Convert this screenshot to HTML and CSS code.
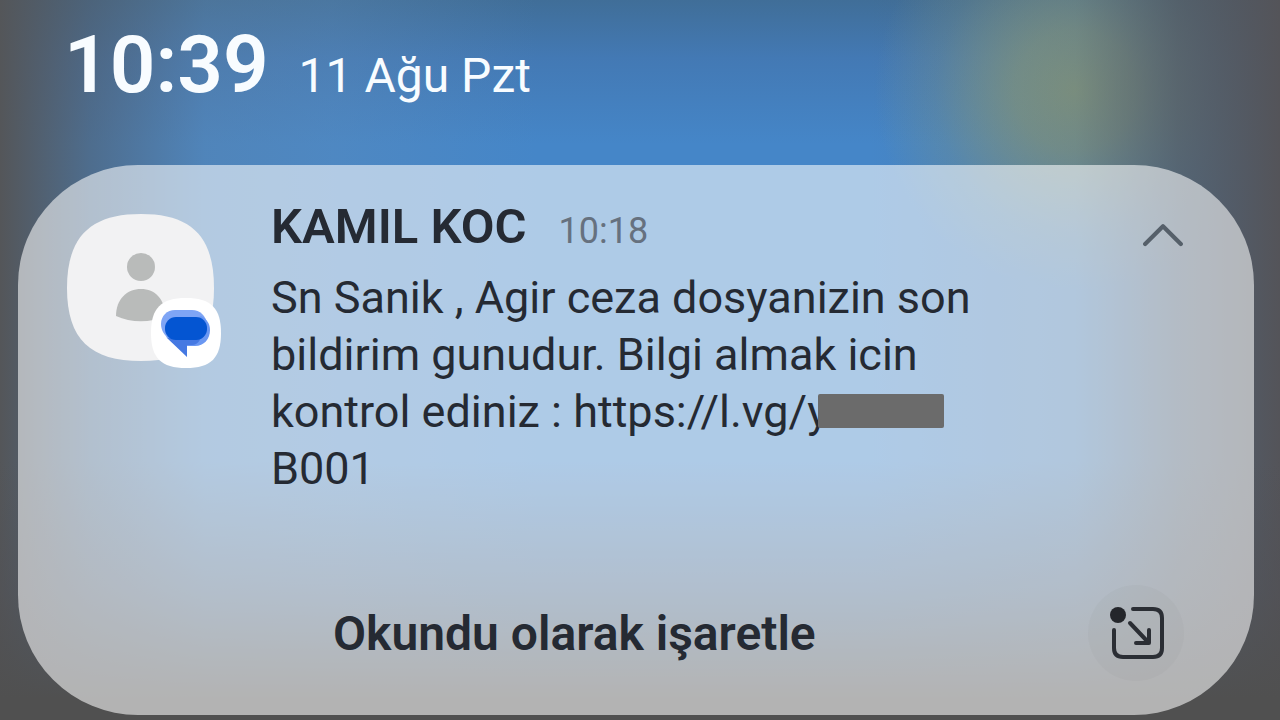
FILE: index.html
```
<!DOCTYPE html>
<html lang="tr">
<head>
<meta charset="UTF-8">
<meta name="viewport" content="width=device-width, initial-scale=1.0">

<title>Bildirimler</title>

<link rel="stylesheet" href="styles.css">
</head>

<body>

<!-- STATUS -->
<header class="status">
  <time class="clock">10:39</time>
  <span class="date">11 Ağu Pzt</span>
</header>

<!-- NOTIFICATION -->
<main class="card">

  <div class="row">
    <div class="avatar">
      <svg viewBox="0 0 148 148" aria-hidden="true">
        <path fill="#f2f2f3" d="M74 0C124 0 147 22 147 74S124 147 74 147 0 126 0 74 24 0 74 0Z"/>
        <circle cx="74" cy="53" r="14" fill="#b9bbba"/>
        <path fill="#b9bbba" d="M74 75c14 0 24 10 24 27-14 7-34 7-49 0 0-17 11-27 25-27Z"/>
      </svg>
      <svg class="badge" viewBox="0 0 70 70" aria-hidden="true">
        <path fill="#fff" d="M35 0C60 0 70 10 70 35S60 70 35 70 0 60 0 35 10 0 35 0Z"/>
        <path fill="#7fa5f5" d="M24 12h17c8 0 14 6 15 14L18 41c-5-4-8-9-8-15 0-8 6-14 14-14Z"/>
        <path fill="#6a97f2" d="M50 18c6 3 9 8 9 14 0 9-6 16-15 16h-8L15 39Z"/>
        <path fill="#4679e2" d="M16 40h32c3 0-1 7-7 7h-5v12Z"/>
        <rect x="14" y="19" width="42" height="23" rx="11" fill="#0455d2"/>
      </svg>
    </div>

    <div class="message">
      <div class="title">
        <h1>KAMIL KOC</h1>
        <time>10:18</time>
      </div>
      <p>Sn Sanik , Agir ceza dosyanizin son bildirim gunudur. Bilgi almak icin kontrol ediniz : https://l.vg/y<span class="redacted"></span> B001</p>
    </div>

    <button class="toggle" aria-label="Daralt">
      <svg viewBox="0 0 40 24" aria-hidden="true">
        <path d="M3 21 20 4l17 17" fill="none" stroke="#56606a" stroke-width="4" stroke-linecap="round" stroke-linejoin="round"/>
      </svg>
    </button>
  </div>

  <div class="actions">
    <button class="read">Okundu olarak işaretle</button>
    <button class="popup" aria-label="Açılır pencerede aç">
      <svg viewBox="0 0 56 56" aria-hidden="true">
        <circle cx="10" cy="10" r="8" fill="#24262b"/>
        <g fill="none" stroke="#2b2e34" stroke-width="4" stroke-linecap="round" stroke-linejoin="round">
          <path d="M25 4h20q9 0 9 9v30q0 9-9 9H15q-9 0-9-9V25"/>
          <path d="M22 18l18 19M28 38h13V25"/>
        </g>
      </svg>
    </button>
  </div>

</main>

</body>
</html>
```

FILE: styles.css
```
*{
 box-sizing:border-box;
}

body{
 margin:0;
 min-height:100vh;
 padding:0 26px 5px 18px;
 display:flex;
 flex-direction:column;
 font-family:Roboto,"Liberation Sans",sans-serif;
 color:#252a33;
 background:
  linear-gradient(to bottom,transparent 64%,rgba(80,80,84,0.5) 82%,#505050 97%),
  linear-gradient(to right,#545659 0,rgba(84,92,102,0.6) 7%,rgba(100,130,160,0.35) 16%,rgba(100,140,180,0.3) 26%,transparent 42%),
  linear-gradient(to left,#545459 0,rgba(84,88,94,0.75) 8%,rgba(90,105,120,0.3) 16%,transparent 32%),
  radial-gradient(ellipse 200px 200px at 1075px 90px,#869c80 0,rgba(134,156,128,0.8) 30%,rgba(134,156,128,0.25) 70%,transparent 100%),
  linear-gradient(to bottom,#406e98 0,#4379b4 8%,#4586c8 20%);
}

h1,p{
 margin:0;
}

button{
 border:none;
 padding:0;
 background:none;
 font-family:inherit;
 color:inherit;
 cursor:pointer;
}

svg{
 display:block;
}

/* STATUS */
.status{
 height:165px;
 padding:18px 46px;
 display:flex;
 align-items:baseline;
 gap:30px;
 color:#f8fcff;
}

.clock{
 font-size:80px;
 font-weight:600;
}

.date{
 font-size:48px;
}

/* CARD */
.card{
 flex:1;
 display:flex;
 flex-direction:column;
 justify-content:space-between;
 padding:32px 70px 34px 49px;
 border-radius:120px;
 background:rgba(255,255,255,0.57);
}

.row{
 display:flex;
 align-items:flex-start;
}

.avatar{
 position:relative;
 width:148px;
 margin:17px 56px 0 0;
}

.badge{
 position:absolute;
 right:-6px;
 bottom:-6px;
 width:70px;
}

.message{
 flex:1;
 max-width:720px;
}

.title{
 display:flex;
 align-items:baseline;
 gap:32px;
 line-height:60px;
}

.title h1{
 font-size:49px;
 font-weight:600;
}

.title time{
 font-size:36px;
 color:#66717f;
}

.message p{
 margin-top:8px;
 font-size:45px;
 line-height:57px;
}

.redacted{
 display:inline-block;
 width:126px;
 height:34px;
 margin-left:-10px;
 border-radius:2px;
 background:#6b6b6b;
 vertical-align:-1px;
}

.toggle{
 width:42px;
 margin:25px 0 0 auto;
}

/* ACTIONS */
.actions{
 display:flex;
 align-items:center;
 justify-content:space-between;
 padding-left:266px;
}

.read{
 font-size:48px;
 font-weight:600;
}

.popup{
 width:96px;
 height:96px;
 padding:20px;
 border-radius:50%;
 background:rgba(120,120,120,0.06);
}
```
